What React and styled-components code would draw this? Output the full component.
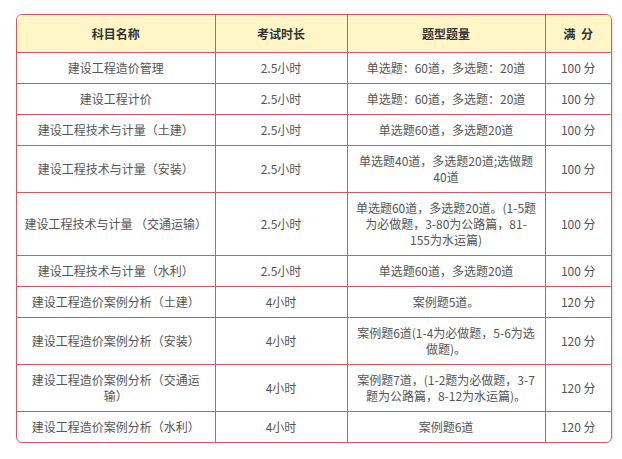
import React from 'react';
import styled, { createGlobalStyle } from 'styled-components';

// Base page styles
const GlobalStyle = createGlobalStyle`
  body {
    margin: 0;
    background: #ffffff;
    font-family: "Noto Sans CJK SC", "Liberation Sans", sans-serif;
  }
`;

const Page = styled.div`
  padding: 14px 0 0 16px;
`;

// Rounded frame around the table
const Frame = styled.div`
  width: 594px;
  border: 1px solid #d35a64;
  border-radius: 6px;
  overflow: hidden;
  box-shadow: 1px 1px 3px rgba(0, 0, 0, 0.12);
`;

const Table = styled.table`
  width: 100%;
  border-collapse: collapse;
  table-layout: fixed;
`;

const HeadCell = styled.th`
  height: 37px;
  padding: 0 6px;
  background: #fff6c8;
  color: #333333;
  font-size: 12px;
  font-weight: 700;
  line-height: 16px;
  text-align: center;
  vertical-align: middle;
  border-right: 1px solid #d35a64;
  border-bottom: 1px solid #d35a64;

  &:last-child {
    border-right: none;
  }
`;

const Cell = styled.td`
  padding: 7px 6px;
  color: #555555;
  font-size: 12px;
  line-height: 16px;
  text-align: center;
  vertical-align: middle;
  border-right: 1px solid #d35a64;
  border-bottom: 1px solid #d35a64;

  &:last-child {
    border-right: none;
  }

  tr:last-child > & {
    border-bottom: none;
  }
`;

const columns = [
  { label: '科目名称', width: 198 },
  { label: '考试时长', width: 132 },
  { label: '题型题量', width: 198 },
  { label: '满\u00a0\u00a0分', width: 66 },
];

const rows = [
  { subject: ['建设工程造价管理'], time: '2.5小时', items: ['单选题：60道，多选题：20道'], score: '100 分' },
  { subject: ['建设工程计价'], time: '2.5小时', items: ['单选题：60道，多选题：20道'], score: '100 分' },
  { subject: ['建设工程技术与计量（土建）'], time: '2.5小时', items: ['单选题60道，多选题20道'], score: '100 分' },
  { subject: ['建设工程技术与计量（安装）'], time: '2.5小时', items: ['单选题40道，多选题20道;选做题', '40道'], score: '100 分' },
  {
    subject: ['建设工程技术与计量 （交通运输）'],
    time: '2.5小时',
    items: ['单选题60道，多选题20道。(1-5题', '为必做题，3-80为公路篇，81-', '155为水运篇)'],
    score: '100 分',
  },
  { subject: ['建设工程技术与计量（水利）'], time: '2.5小时', items: ['单选题60道，多选题20道'], score: '100 分' },
  { subject: ['建设工程造价案例分析（土建）'], time: '4小时', items: ['案例题5道。'], score: '120 分' },
  { subject: ['建设工程造价案例分析（安装）'], time: '4小时', items: ['案例题6道(1-4为必做题，5-6为选', '做题)。'], score: '120 分' },
  {
    subject: ['建设工程造价案例分析（交通运', '输）'],
    time: '4小时',
    items: ['案例题7道，(1-2题为必做题，3-7', '题为公路篇，8-12为水运篇)。'],
    score: '120 分',
  },
  { subject: ['建设工程造价案例分析（水利）'], time: '4小时', items: ['案例题6道'], score: '120 分' },
];

// Renders fixed line breaks the way the source table wraps
const Lines = ({ lines }) =>
  lines.map((line, i) => (
    <React.Fragment key={i}>
      {i > 0 && <br />}
      {line}
    </React.Fragment>
  ));

const App = () => (
  <>
    <GlobalStyle />
    <Page>
      <Frame>
        <Table>
          <colgroup>
            {columns.map((c) => (
              <col key={c.label} style={{ width: c.width }} />
            ))}
          </colgroup>
          <thead>
            <tr>
              {columns.map((c) => (
                <HeadCell key={c.label}>{c.label}</HeadCell>
              ))}
            </tr>
          </thead>
          <tbody>
            {rows.map((r, i) => (
              <tr key={i}>
                <Cell><Lines lines={r.subject} /></Cell>
                <Cell>{r.time}</Cell>
                <Cell><Lines lines={r.items} /></Cell>
                <Cell>{r.score}</Cell>
              </tr>
            ))}
          </tbody>
        </Table>
      </Frame>
    </Page>
  </>
);

export default App;
